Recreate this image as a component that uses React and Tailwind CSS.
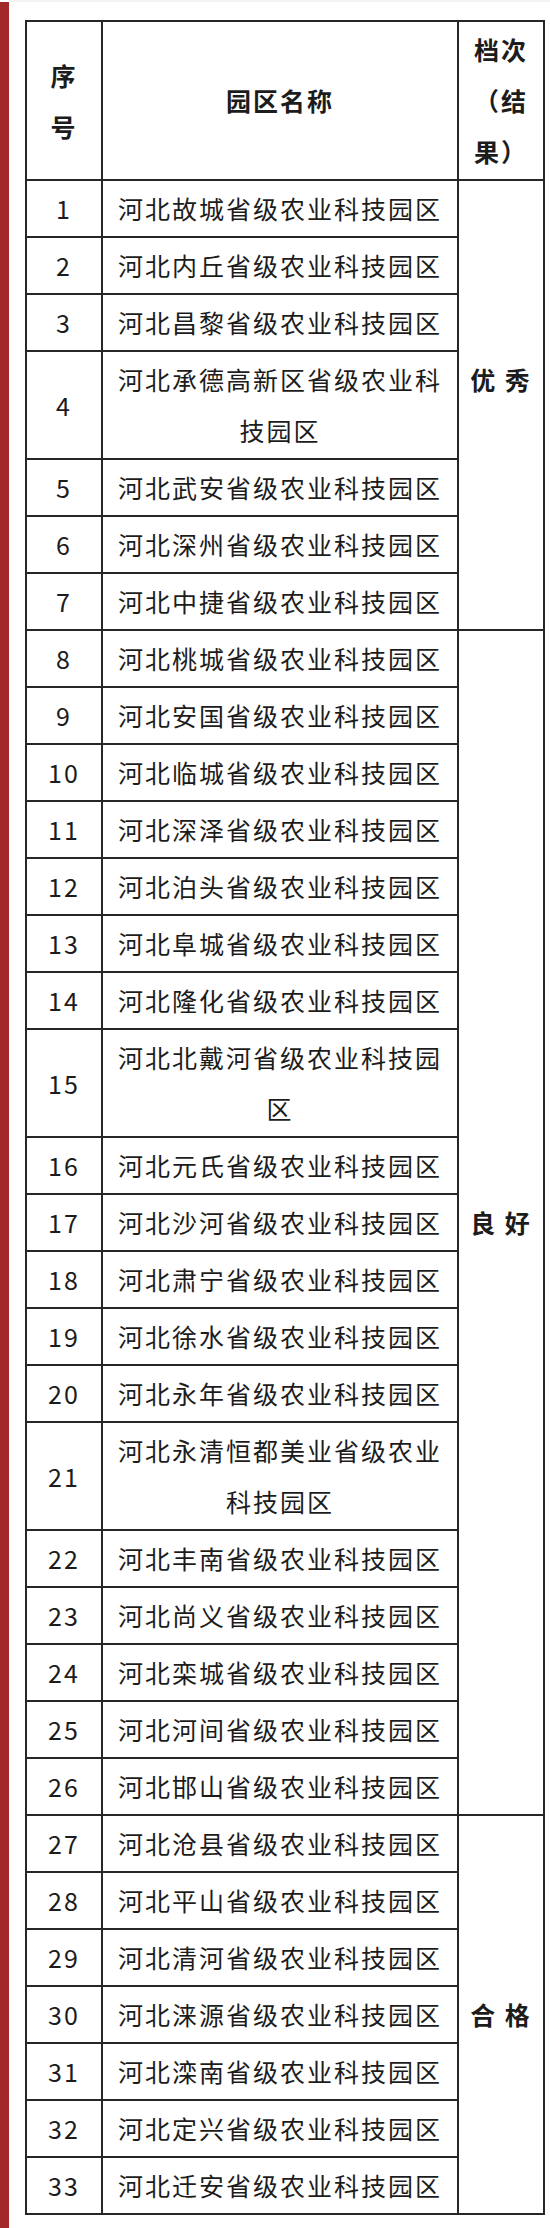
import React from 'react'

const parks = [
    ['河北故城省级农业科技园区'],
    ['河北内丘省级农业科技园区'],
    ['河北昌黎省级农业科技园区'],
    ['河北承德高新区省级农业科', '技园区'],
    ['河北武安省级农业科技园区'],
    ['河北深州省级农业科技园区'],
    ['河北中捷省级农业科技园区'],
    ['河北桃城省级农业科技园区'],
    ['河北安国省级农业科技园区'],
    ['河北临城省级农业科技园区'],
    ['河北深泽省级农业科技园区'],
    ['河北泊头省级农业科技园区'],
    ['河北阜城省级农业科技园区'],
    ['河北隆化省级农业科技园区'],
    ['河北北戴河省级农业科技园', '区'],
    ['河北元氏省级农业科技园区'],
    ['河北沙河省级农业科技园区'],
    ['河北肃宁省级农业科技园区'],
    ['河北徐水省级农业科技园区'],
    ['河北永年省级农业科技园区'],
    ['河北永清恒都美业省级农业', '科技园区'],
    ['河北丰南省级农业科技园区'],
    ['河北尚义省级农业科技园区'],
    ['河北栾城省级农业科技园区'],
    ['河北河间省级农业科技园区'],
    ['河北邯山省级农业科技园区'],
    ['河北沧县省级农业科技园区'],
    ['河北平山省级农业科技园区'],
    ['河北清河省级农业科技园区'],
    ['河北涞源省级农业科技园区'],
    ['河北滦南省级农业科技园区'],
    ['河北定兴省级农业科技园区'],
    ['河北迁安省级农业科技园区'],
];

// first row index of each grade -> [label, rowSpan, extra blank line]
const grades = {
    0: ['优 秀', 7, true],
    7: ['良 好', 19, false],
    26: ['合 格', 7, false],
};

const cell = "border-2 border-[#262626] px-1 py-[2px] text-center align-middle";

const App = () => {
    return (
        <div className="relative w-[550px] h-[2228px] bg-white flex font-['Noto_Sans_CJK_SC',sans-serif] text-[25px] leading-[51px] tracking-[2px] text-[#1c1c1c]">
            <div className="absolute top-0 left-[9px] right-0 h-[2px] bg-[#f3f3f3]"></div>
            <div className="w-[9px] mt-[2px] bg-[#a3282a] shrink-0"></div>
            <div className="pl-[16px] pt-[20px]">
                <table className="table-fixed border-collapse w-[518px]">
                    <colgroup>
                        <col className="w-[76px]" />
                        <col className="w-[356px]" />
                        <col className="w-[86px]" />
                    </colgroup>
                    <thead className="font-bold">
                        <tr>
                            <th className={cell}>序<br />号</th>
                            <th className={cell}>园区名称</th>
                            <th className={cell}>档次<br />（结<br />果）</th>
                        </tr>
                    </thead>
                    <tbody>
                        {parks.map((name, index) => (
                            <tr key={index}>
                                <td className={cell}>{index + 1}</td>
                                <td className={cell}>
                                    {name.map((line, i) => (
                                        <div key={i}>{line}</div>
                                    ))}
                                </td>
                                {grades[index] && (
                                    <td rowSpan={grades[index][1]} className={`${cell} font-bold`}>
                                        <div>{grades[index][0]}</div>
                                        {grades[index][2] && <div>&nbsp;</div>}
                                    </td>
                                )}
                            </tr>
                        ))}
                    </tbody>
                </table>
            </div>
        </div>
    )
}

export default App
